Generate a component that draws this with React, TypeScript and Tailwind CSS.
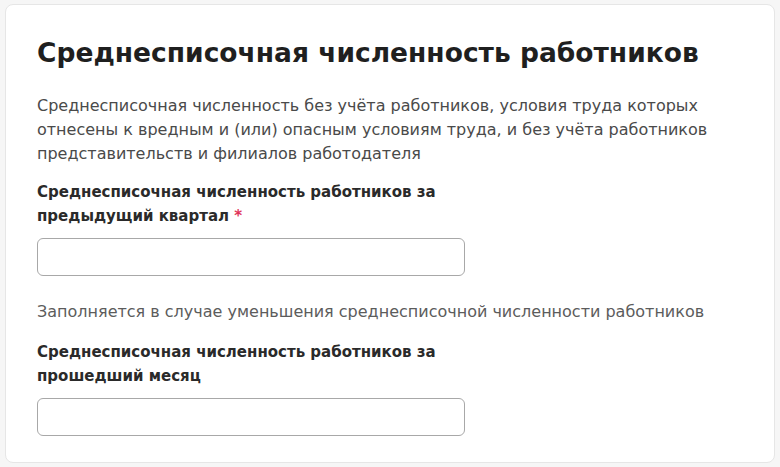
import React from "react";

export default function App() {
  return (
    <div className="w-[780px] h-[467px] bg-[#f6f6f6] pt-[4px] pl-[5px] pr-[5px] overflow-hidden" style={{ fontFamily: '"DejaVu Sans", sans-serif' }}>
      <div className="w-[770px] h-[459px] bg-white border border-[#e6e6e6] rounded-[8px] pl-[31px] pt-[30px]">
        <h1 className="text-[26.5px] leading-[36px] font-semibold text-[#1f1f1f]">
          Среднесписочная численность работников
        </h1>
        <p className="mt-[23px] text-[16px] leading-[24px] text-[#4a4a4a] w-[700px]">
          Среднесписочная численность без учёта работников, условия труда которых отнесены к вредным и (или) опасным условиям труда, и без учёта работников представительств и филиалов работодателя
        </p>
        <div className="w-[428px] mt-[14px]">
          <label className="block text-[15px] leading-[24px] font-semibold text-[#2a2a2a]">
            Среднесписочная численность работников за предыдущий квартал <span className="text-[#e0335a]">*</span>
          </label>
          <input className="mt-[10px] block w-[428px] h-[38px] rounded-[6px] border border-[#a8a8a8] bg-white" />
        </div>
        <p className="mt-[24px] text-[16px] leading-[24px] text-[#5c5c5c]">
          Заполняется в случае уменьшения среднесписочной численности работников
        </p>
        <div className="w-[428px] mt-[16px]">
          <label className="block text-[15px] leading-[24px] font-semibold text-[#2a2a2a]">
            Среднесписочная численность работников за прошедший месяц
          </label>
          <input className="mt-[10px] block w-[428px] h-[38px] rounded-[6px] border border-[#a8a8a8] bg-white" />
        </div>
      </div>
    </div>
  );
}
